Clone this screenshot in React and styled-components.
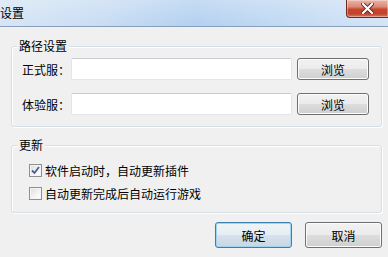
import styled, { createGlobalStyle } from "styled-components";

const Global = createGlobalStyle`
  html, body {
    margin: 0;
    padding: 0;
    background: #f0f0f0;
  }
`;

const Window = styled.div`
  width: 388px;
  height: 257px;
  overflow: hidden;
  background: #f0f0f0;
  font-family: "Noto Sans CJK SC", "Noto Sans", sans-serif;
  font-size: 12px;
  color: #000;
  display: flex;
  flex-direction: column;
`;

const TitleBar = styled.div`
  height: 26px;
  flex-shrink: 0;
  border-bottom: 1px solid #8a9fba;
  display: flex;
  justify-content: space-between;
  align-items: flex-start;
  background:
    linear-gradient(to bottom, rgba(255, 255, 255, 0.25), rgba(255, 255, 255, 0)),
    linear-gradient(
      to right,
      #d6e5f5 0%,
      #c9ddf3 25%,
      #b3d0f0 50%,
      #c2daf3 75%,
      #d4e4f5 100%
    );
`;

const Title = styled.div`
  line-height: 26px;
  font-size: 12px;
`;

const CloseButton = styled.div`
  width: 41px;
  height: 17px;
  border: 1px solid #6d2a20;
  border-top: none;
  border-right: none;
  border-bottom-left-radius: 4px;
  background: linear-gradient(
    to bottom,
    #eab3a6 0%,
    #dd8a77 40%,
    #c8462c 55%,
    #c0442c 80%,
    #d97660 100%
  );
  display: flex;
  align-items: center;
  justify-content: center;
  box-shadow: inset 0 0 0 1px rgba(255, 255, 255, 0.35);
`;

const Body = styled.div`
  flex: 1;
  padding: 19px 6px 0 11px;
  display: flex;
  flex-direction: column;
`;

const GroupBox = styled.div`
  position: relative;
  border: 1px solid #d5dfe5;
  border-radius: 3px;
  box-shadow: inset 1px 1px 0 #fff, 1px 1px 0 #fff;
  margin-top: ${(p) => p.$top || 0}px;
  padding: ${(p) => p.$padding};
  display: flex;
  flex-direction: column;
  gap: ${(p) => p.$gap}px;
`;

const Legend = styled.div`
  position: absolute;
  top: -9px;
  left: 5px;
  padding: 0 2px;
  background: #f0f0f0;
  line-height: 16px;
`;

const PathRow = styled.div`
  display: flex;
  align-items: center;
  height: 22px;
`;

const Label = styled.div`
  width: 49px;
  flex-shrink: 0;
  white-space: nowrap;
`;

const TextInput = styled.input`
  width: 221px;
  height: 22px;
  box-sizing: border-box;
  border: 1px solid #e2e5ea;
  border-top-color: #c9ccd2;
  border-radius: 2px;
  background: #fff;
  margin: 0;
  padding: 0 3px;
  outline: none;
`;

const Button = styled.button`
  width: ${(p) => p.$w}px;
  height: ${(p) => p.$h}px;
  margin: 0 0 0 ${(p) => p.$ml || 0}px;
  padding: 0;
  box-sizing: border-box;
  font-family: inherit;
  font-size: 12px;
  color: #000;
  border-radius: 3px;
  border: 1px solid ${(p) => (p.$primary ? "#3c7fb1" : "#707070")};
  box-shadow: inset 0 0 0 1px
    ${(p) => (p.$primary ? "#9fd3f0" : "#fcfcfc")};
  background: ${(p) =>
    p.$primary
      ? "linear-gradient(to bottom, #eef4f8 0%, #e6eef4 49%, #d6e2ec 50%, #c9d7e3 100%)"
      : "linear-gradient(to bottom, #f2f2f2 0%, #ebebeb 49%, #dddddd 50%, #cfcfcf 100%)"};
`;

const ButtonRow = styled.div`
  display: flex;
  justify-content: flex-end;
  gap: 13px;
  margin-top: 9px;
`;

const CheckRow = styled.label`
  display: flex;
  align-items: center;
  gap: 3px;
  height: 14px;
  white-space: nowrap;
`;

const Box = styled.span`
  width: 13px;
  height: 13px;
  box-sizing: border-box;
  border: 1px solid #8e8f8f;
  background: linear-gradient(135deg, #dcdcdc 0%, #f5f5f5 60%, #ffffff 100%);
  box-shadow: inset 0 0 0 1px #f4f4f4;
  display: flex;
  align-items: center;
  justify-content: center;
  flex-shrink: 0;
`;

const Check = () => (
  <svg width="9" height="9" viewBox="0 0 9 9">
    <path
      d="M1 4.5 L3.5 7 L8 1"
      fill="none"
      stroke="#4a5f97"
      strokeWidth="1.8"
    />
  </svg>
);

const CloseX = () => (
  <svg width="13" height="11" viewBox="0 0 13 11">
    <path
      d="M2 1 L11 10 M11 1 L2 10"
      stroke="#5a2118"
      strokeWidth="4"
      strokeLinecap="square"
    />
    <path
      d="M2 1 L11 10 M11 1 L2 10"
      stroke="#fff"
      strokeWidth="2.2"
      strokeLinecap="square"
    />
  </svg>
);

const CheckBox = ({ checked, children }) => (
  <CheckRow>
    <Box>{checked && <Check />}</Box>
    <span>{children}</span>
  </CheckRow>
);

const PathField = ({ label }) => (
  <PathRow>
    <Label>{label}</Label>
    <TextInput />
    <Button $w={72} $h={22} $ml={5}>
      浏览
    </Button>
  </PathRow>
);

export default function App() {
  return (
    <Window>
      <Global />
      <TitleBar>
        <Title>设置</Title>
        <CloseButton>
          <CloseX />
        </CloseButton>
      </TitleBar>
      <Body>
        <GroupBox $padding="11px 0 11px 10px" $gap={13}>
          <Legend>路径设置</Legend>
          <PathField label="正式服：" />
          <PathField label="体验服：" />
        </GroupBox>
        <GroupBox $top={18} $padding="17px 0 12px 17px" $gap={9}>
          <Legend>更新</Legend>
          <CheckBox checked>软件启动时，自动更新插件</CheckBox>
          <CheckBox>自动更新完成后自动运行游戏</CheckBox>
        </GroupBox>
        <ButtonRow>
          <Button $w={77} $h={26} $primary>
            确定
          </Button>
          <Button $w={77} $h={26}>
            取消
          </Button>
        </ButtonRow>
      </Body>
    </Window>
  );
}
